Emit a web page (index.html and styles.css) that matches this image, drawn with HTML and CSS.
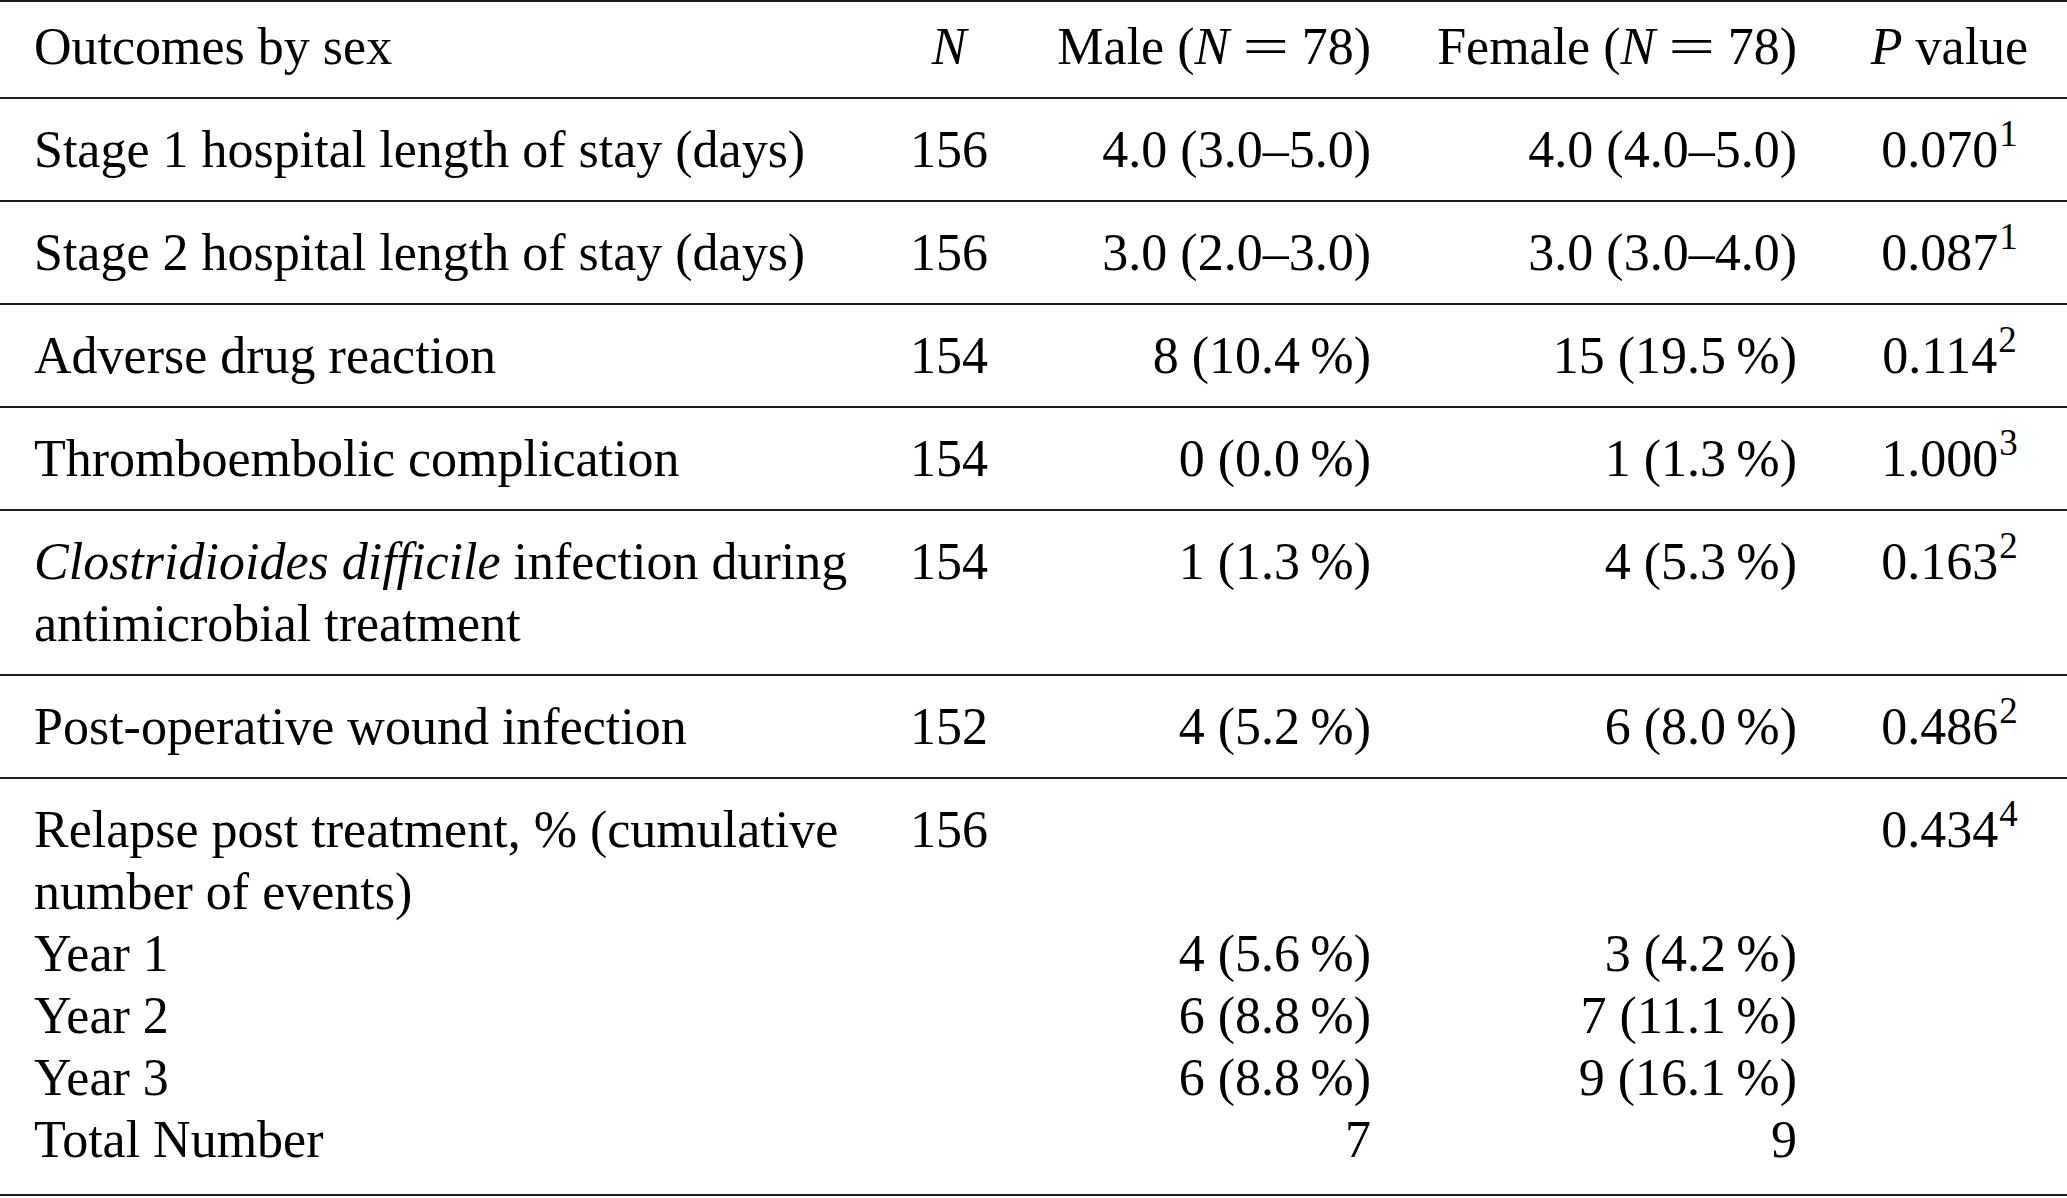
FILE: index.html
```html
<!DOCTYPE html>
<html lang="en">
<head>
<meta charset="utf-8">
<title>Outcomes by sex</title>
<link rel="stylesheet" href="styles.css">
</head>
<body>
<table class="tbl">
  <colgroup>
    <col class="w1"><col class="w2"><col class="w3"><col class="w4"><col class="w5">
  </colgroup>
  <thead>
    <tr class="head rule">
      <th class="c1">Outcomes by sex</th>
      <th class="c2"><i>N</i></th>
      <th class="c3">Male (<i>N</i> <span class="eq">=</span> 78)</th>
      <th class="c4">Female (<i>N</i> <span class="eq">=</span> 78)</th>
      <th class="c5"><i>P</i> value</th>
    </tr>
  </thead>
  <tbody>
    <tr class="rule">
      <td class="c1">Stage 1 hospital length of stay (days)</td>
      <td class="c2">156</td>
      <td class="c3">4.0 (3.0–5.0)</td>
      <td class="c4">4.0 (4.0–5.0)</td>
      <td class="c5">0.070<span class="sp">1</span></td>
    </tr>
    <tr class="rule">
      <td class="c1">Stage 2 hospital length of stay (days)</td>
      <td class="c2">156</td>
      <td class="c3">3.0 (2.0–3.0)</td>
      <td class="c4">3.0 (3.0–4.0)</td>
      <td class="c5">0.087<span class="sp">1</span></td>
    </tr>
    <tr class="rule">
      <td class="c1">Adverse drug reaction</td>
      <td class="c2">154</td>
      <td class="c3">8 (10.4&#8201;%)</td>
      <td class="c4">15 (19.5&#8201;%)</td>
      <td class="c5">0.114<span class="sp">2</span></td>
    </tr>
    <tr class="rule">
      <td class="c1">Thromboembolic complication</td>
      <td class="c2">154</td>
      <td class="c3">0 (0.0&#8201;%)</td>
      <td class="c4">1 (1.3&#8201;%)</td>
      <td class="c5">1.000<span class="sp">3</span></td>
    </tr>
    <tr class="rule">
      <td class="c1"><i>Clostridioides difficile</i> infection during antimicrobial treatment</td>
      <td class="c2">154</td>
      <td class="c3">1 (1.3&#8201;%)</td>
      <td class="c4">4 (5.3&#8201;%)</td>
      <td class="c5">0.163<span class="sp">2</span></td>
    </tr>
    <tr class="rule">
      <td class="c1">Post-operative wound infection</td>
      <td class="c2">152</td>
      <td class="c3">4 (5.2&#8201;%)</td>
      <td class="c4">6 (8.0&#8201;%)</td>
      <td class="c5">0.486<span class="sp">2</span></td>
    </tr>
    <tr class="grp first">
      <td class="c1">Relapse post treatment, % (cumulative number of events)</td>
      <td class="c2">156</td>
      <td class="c3"></td>
      <td class="c4"></td>
      <td class="c5">0.434<span class="sp">4</span></td>
    </tr>
    <tr class="grp">
      <td class="c1">Year 1</td>
      <td class="c2"></td>
      <td class="c3">4 (5.6&#8201;%)</td>
      <td class="c4">3 (4.2&#8201;%)</td>
      <td class="c5"></td>
    </tr>
    <tr class="grp">
      <td class="c1">Year 2</td>
      <td class="c2"></td>
      <td class="c3">6 (8.8&#8201;%)</td>
      <td class="c4">7 (11.1&#8201;%)</td>
      <td class="c5"></td>
    </tr>
    <tr class="grp">
      <td class="c1">Year 3</td>
      <td class="c2"></td>
      <td class="c3">6 (8.8&#8201;%)</td>
      <td class="c4">9 (16.1&#8201;%)</td>
      <td class="c5"></td>
    </tr>
    <tr class="grp last rule">
      <td class="c1">Total Number</td>
      <td class="c2"></td>
      <td class="c3">7</td>
      <td class="c4">9</td>
      <td class="c5"></td>
    </tr>
  </tbody>
</table>
</body>
</html>
```

FILE: styles.css
```css
html, body {
  margin: 0;
  padding: 0;
  background: #ffffff;
}

.tbl {
  width: 2067px;
  table-layout: fixed;
  border-collapse: separate;
  border-spacing: 0;
  font-family: "Liberation Serif", "Times New Roman", serif;
  font-size: 52px;
  line-height: 62px;
  color: #000000;
}

.w1 { width: 880px; }
.w2 { width: 138px; }
.w3 { width: 388px; }
.w4 { width: 426px; }
.w5 { width: 235px; }

.tbl th,
.tbl td {
  padding: 20px 0 19px 0;
  vertical-align: top;
  font-weight: normal;
  white-space: normal;
}

.tbl .head th {
  padding-top: 14px;
  border-top: 2px solid #1c1c1c;
}

.tbl .rule > th,
.tbl .rule > td {
  border-bottom: 2px solid #1c1c1c;
}

.c1 {
  text-align: left;
  padding-left: 34px !important;
}

.c2 { text-align: center; }

.c3,
.c4 {
  text-align: right;
  padding-right: 35px !important;
}

.c5 { text-align: center; }

.tbl .grp > td {
  padding-top: 0;
  padding-bottom: 0;
}

.tbl .grp.first > td { padding-top: 20px; }
.tbl .grp.last > td { padding-bottom: 23px; }

.eq {
  display: inline-block;
  margin: 0 0.165em;
  transform: scaleX(1.6);
}

.sp {
  font-size: 37px;
  line-height: 0;
  vertical-align: 21px;
  margin-left: 1px;
}

i { font-style: italic; }
```
